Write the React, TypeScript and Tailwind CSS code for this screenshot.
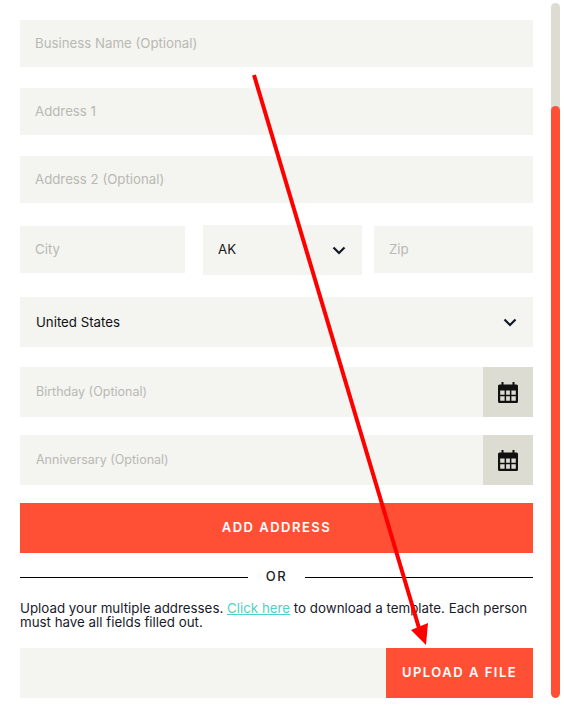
import React from "react";

const FIELD = "block h-full w-full bg-[#f4f4f0] pb-[2px] pl-[15px] text-[13.25px] text-[#1a1a1a] outline-none placeholder:text-[#b9b9b4]";
const DATE_FIELD = "block h-full w-full bg-[#f4f4f0] pb-[2px] pl-4 text-[12.5px] text-[#1a1a1a] outline-none placeholder:text-[#b9b9b4]";

function Chevron() {
  return (
    <svg width="14" height="9" viewBox="0 0 14 9" fill="none" className="shrink-0">
      <path d="M1.5 1.5 7 7l5.500-5.500" stroke="#111827" strokeWidth="2.2" />
    </svg>
  );
}

function CalendarIcon() {
  return (
    <svg width="20" height="21" viewBox="0 0 20 21" className="block">
      <path
        fillRule="evenodd"
        fill="#111"
        d="M3.500 0h2v2.500h9V0h2v2.500h2A1.500 1.500 0 0 1 20 4v15.500a1.500 1.500 0 0 1-1.500 1.500h-17A1.500 1.500 0 0 1 0 19.500V4a1.500 1.500 0 0 1 1.500-1.500h2V0ZM2.200 8.500v4.200h4.400V8.500H2.200Zm5.900 0v4.200h3.800V8.500H8.100Zm5.300 0v4.200h4.400V8.500h-4.400ZM2.200 14.200v4.600h4.400v-4.600H2.200Zm5.900 0v4.600h3.800v-4.600H8.100Zm5.300 0v4.600h4.400v-4.600h-4.400Z"
      />
    </svg>
  );
}

function DateField({ placeholder, className }: { placeholder: string; className: string }) {
  return (
    <div className={`flex h-[50px] ${className}`}>
      <input placeholder={placeholder} className={DATE_FIELD} />
      <div className="flex w-[50px] shrink-0 items-center justify-center bg-[#dcdcd3]">
        <CalendarIcon />
      </div>
    </div>
  );
}

export default function App() {
  return (
    <div className="relative flex h-[708px] w-[564px] overflow-hidden bg-white font-['Inter',sans-serif]">
      <div className="ml-5 mt-5 w-[513px]">
        <div className="h-[47px]">
          <input placeholder="Business Name (Optional)" className={FIELD} />
        </div>
        <div className="mt-[21px] h-[47px]">
          <input placeholder="Address 1" className={FIELD} />
        </div>
        <div className="mt-[21px] h-[47px]">
          <input placeholder="Address 2 (Optional)" className={FIELD} />
        </div>

        <div className="mt-[22px] flex h-[50px] items-start">
          <div className="mt-px h-[47px] w-[165px]">
            <input placeholder="City" className={FIELD} />
          </div>
          <div className="ml-[18px] flex h-[50px] w-[159px] items-center justify-between bg-[#f4f4f0] pl-[15px] pr-4 text-[13.25px] text-[#1a1a1a]">
            AK
            <Chevron />
          </div>
          <div className="ml-3 mt-px h-[47px] w-[159px]">
            <input placeholder="Zip" className={FIELD} />
          </div>
        </div>

        <div className="mt-[22px] flex h-[50px] items-center justify-between bg-[#f4f4f0] pl-4 pr-4 text-[13.25px] text-[#111]">
          <span className="mt-[2px]">United States</span>
          <Chevron />
        </div>

        <DateField placeholder="Birthday (Optional)" className="mt-5" />
        <DateField placeholder="Anniversary (Optional)" className="mt-[18px]" />

        <button className="mt-[18px] block h-[50px] w-full bg-[#ff5035] text-[13px] font-semibold tracking-[1.5px] text-white">
          ADD ADDRESS
        </button>

        <div className="mt-[14px] flex h-[20px] items-center">
          <div className="h-px w-[228px] bg-black" />
          <span className="w-[57px] text-center text-[13px] font-medium tracking-[1.5px] text-[#222]">OR</span>
          <div className="h-px flex-1 bg-black" />
        </div>

        <p className="mt-[14px] text-[13.33px] leading-[14px] text-[#1a1a2a]">
          Upload your multiple addresses.{" "}
          <a className="text-[#4fd1c5] underline">Click here</a> to download a template. Each person must have all fields filled out.
        </p>

        <div className="mt-[19px] flex h-[50px]">
          <div className="flex-1 bg-[#f4f4f0]" />
          <button className="w-[147px] bg-[#ff5035] text-[13px] font-semibold tracking-[1.5px] text-white">
            UPLOAD A FILE
          </button>
        </div>
      </div>

      {/* scroll progress */}
      <div className="ml-[18px] mt-[3px] h-[695px] w-[9px] overflow-hidden rounded-full bg-[#dcdcd3]">
        <div className="mt-[103px] h-[592px] rounded-full bg-[#ff5035]" />
      </div>

      {/* red annotation arrow */}
      <svg width="564" height="708" className="pointer-events-none absolute inset-0">
        <line x1="254" y1="75" x2="419" y2="628" stroke="#ff0000" strokeWidth="4" />
        <polygon points="411,630 428,623 426,645" fill="#ff0000" />
      </svg>
    </div>
  );
}
